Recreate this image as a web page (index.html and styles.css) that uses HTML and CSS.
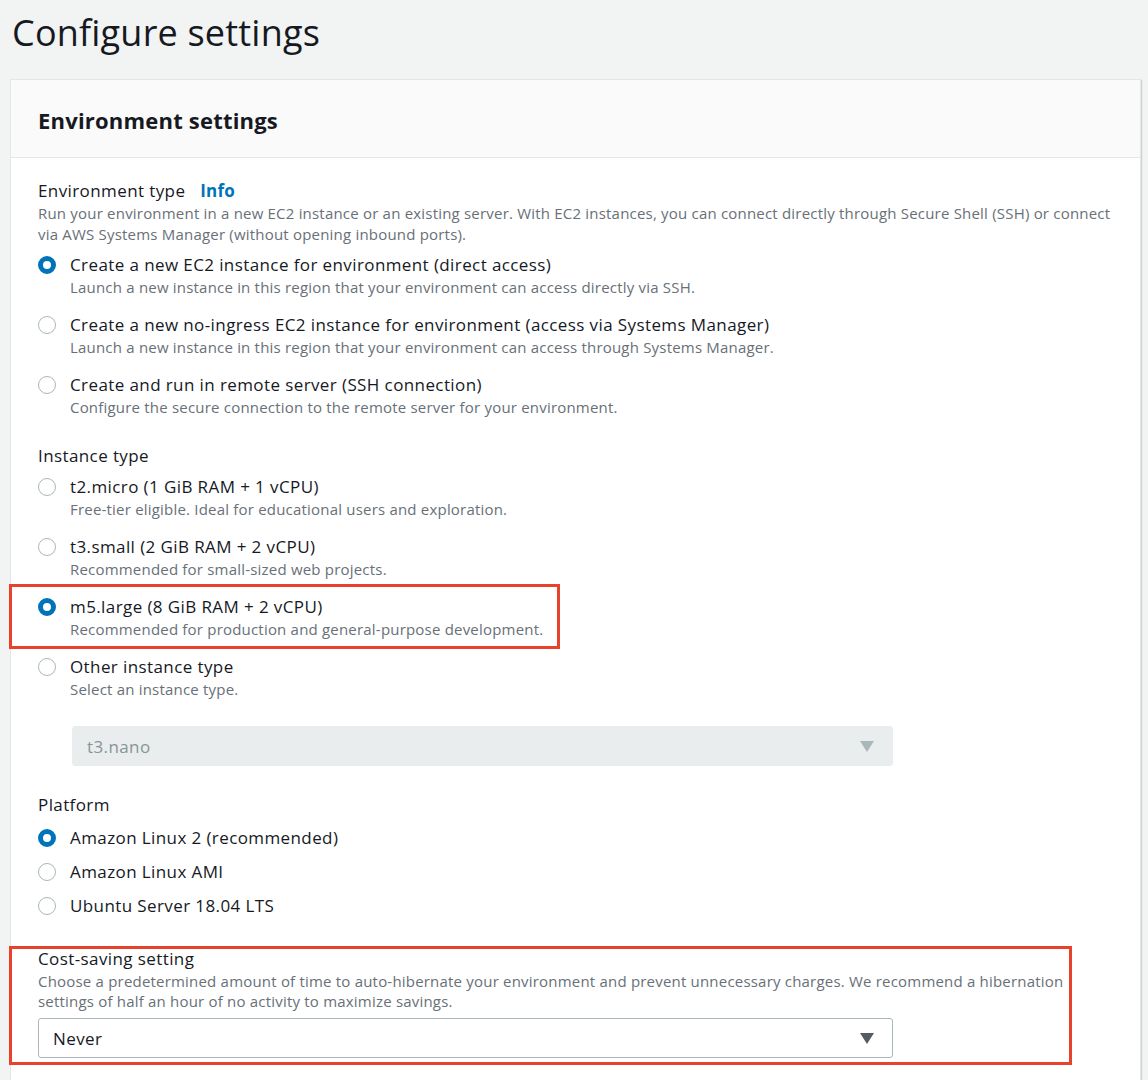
FILE: index.html
```html
<!DOCTYPE html>
<html>
<head>
<meta charset="utf-8">
<link rel="stylesheet" href="styles.css">
</head>
<body>
<div class="page">
  <h1 class="page-title">Configure settings</h1>
  <section class="panel">
    <header class="panel-header"><h2>Environment settings</h2></header>
    <div class="panel-body">

      <div class="field">
        <div class="field-label">Environment type <a class="info">Info</a></div>
        <div class="field-desc">Run your environment in a new EC2 instance or an existing server. With EC2 instances, you can connect directly through Secure Shell (SSH) or connect via AWS Systems Manager (without opening inbound ports).</div>
        <div class="radio-group">
          <label class="radio checked"><span class="dot"></span><span class="radio-text"><span class="radio-label">Create a new EC2 instance for environment (direct access)</span><span class="radio-desc">Launch a new instance in this region that your environment can access directly via SSH.</span></span></label>
          <label class="radio"><span class="dot"></span><span class="radio-text"><span class="radio-label">Create a new no-ingress EC2 instance for environment (access via Systems Manager)</span><span class="radio-desc">Launch a new instance in this region that your environment can access through Systems Manager.</span></span></label>
          <label class="radio"><span class="dot"></span><span class="radio-text"><span class="radio-label">Create and run in remote server (SSH connection)</span><span class="radio-desc">Configure the secure connection to the remote server for your environment.</span></span></label>
        </div>
      </div>

      <div class="field">
        <div class="field-label">Instance type</div>
        <div class="radio-group">
          <label class="radio"><span class="dot"></span><span class="radio-text"><span class="radio-label">t2.micro (1 GiB RAM + 1 vCPU)</span><span class="radio-desc">Free-tier eligible. Ideal for educational users and exploration.</span></span></label>
          <label class="radio"><span class="dot"></span><span class="radio-text"><span class="radio-label">t3.small (2 GiB RAM + 2 vCPU)</span><span class="radio-desc">Recommended for small-sized web projects.</span></span></label>
          <label class="radio checked highlight-small"><span class="dot"></span><span class="radio-text"><span class="radio-label">m5.large (8 GiB RAM + 2 vCPU)</span><span class="radio-desc">Recommended for production and general-purpose development.</span></span></label>
          <label class="radio"><span class="dot"></span><span class="radio-text"><span class="radio-label">Other instance type</span><span class="radio-desc">Select an instance type.</span></span></label>
        </div>
        <div class="select disabled indented"><span>t3.nano</span><span class="caret"></span></div>
      </div>

      <div class="field field-platform">
        <div class="field-label">Platform</div>
        <div class="radio-group compact">
          <label class="radio checked"><span class="dot"></span><span class="radio-text"><span class="radio-label">Amazon Linux 2 (recommended)</span></span></label>
          <label class="radio"><span class="dot"></span><span class="radio-text"><span class="radio-label">Amazon Linux AMI</span></span></label>
          <label class="radio"><span class="dot"></span><span class="radio-text"><span class="radio-label">Ubuntu Server 18.04 LTS</span></span></label>
        </div>
      </div>

      <div class="field highlight-wide">
        <div class="field-label">Cost-saving setting</div>
        <div class="field-desc narrow">Choose a predetermined amount of time to auto-hibernate your environment and prevent unnecessary charges. We recommend a hibernation settings of half an hour of no activity to maximize savings.</div>
        <div class="select"><span>Never</span><span class="caret"></span></div>
      </div>

    </div>
  </section>
</div>
</body>
</html>
```
FILE: styles.css
```css
* { box-sizing: border-box; }
html, body { margin: 0; padding: 0; }
body {
  background: #f2f3f3;
  font-family: "Open Sans", Roboto, "Liberation Sans", Arial, sans-serif;
  color: #16191f;
  height: 1080px;
  overflow: hidden;
}
.page { padding: 0 7px 0 10px; }
.page-title {
  margin: 0;
  padding: 11px 0 0 2px;
  height: 79px;
  font-size: 36px;
  line-height: 44px;
  font-weight: 400;
  letter-spacing: 0.2px;
}
.panel {
  background: #fff;
  border: 1px solid #e4e7e7;
  box-shadow: 1px 1px 1px 0 rgba(0, 28, 36, 0.15);
  height: 1100px;
}
.panel-header {
  background: #fafafa;
  border-bottom: 1px solid #e4e7e7;
  height: 78px;
  padding: 0 27px;
  display: flex;
  align-items: center;
}
.panel-header h2 {
  margin: 0;
  font-size: 22px;
  font-weight: 700;
  line-height: 28px;
  padding-top: 3px;
  letter-spacing: 0.2px;
}
.panel-body { padding: 22px 27px 0 27px; }
.field { margin-bottom: 28px; position: relative; }
.field-platform { margin-bottom: 31px; }
.field-label {
  font-size: 17px;
  line-height: 22px;
  letter-spacing: 0.4px;
}
.info {
  color: #0073bb;
  font-weight: 700;
  margin-left: 10px;
  letter-spacing: 0.2px;
}
.field-desc {
  font-size: 15px;
  line-height: 21px;
  color: #687078;
  margin-top: 1px;
  letter-spacing: 0.2px;
}
.field-desc.narrow { max-width: 1030px; line-height: 20px; }
.radio-group {
  display: flex;
  flex-direction: column;
  gap: 17px;
  margin-top: 9px;
}
.radio-group.compact { gap: 12px; margin-top: 11px; }
.radio { display: flex; align-items: flex-start; position: relative; }
.dot {
  flex: none;
  width: 18px;
  height: 18px;
  border-radius: 50%;
  border: 1.5px solid #aab7b8;
  margin-top: 2px;
  margin-right: 14px;
  background: #fff;
}
.radio.checked .dot {
  border: 5px solid #0073bb;
  background: #fff;
}
.radio-text { display: flex; flex-direction: column; }
.radio-label { font-size: 17px; line-height: 22px; letter-spacing: 0.4px; }
.radio-desc {
  font-size: 15px;
  line-height: 20px;
  color: #687078;
  margin-top: 1px;
  letter-spacing: 0.2px;
}
.select {
  display: flex;
  align-items: center;
  justify-content: space-between;
  width: 855px;
  height: 40px;
  border: 1px solid #aab7b8;
  border-radius: 3px;
  background: #fff;
  padding: 0 18px 0 14px;
  font-size: 17px;
  letter-spacing: 0.4px;
  margin-top: 7px;
}
.select.disabled {
  background: #eaeded;
  border-color: #eaeded;
  color: #879596;
}
.select.indented { width: 821px; margin-left: 34px; margin-top: 27px; }
.caret {
  width: 0; height: 0;
  border-left: 7px solid transparent;
  border-right: 7px solid transparent;
  border-top: 11px solid #545b64;
}
.select.disabled .caret { border-top-color: #aab7b8; }
.highlight-small::before {
  content: "";
  position: absolute;
  left: -29px;
  top: -12px;
  width: 545px;
  bottom: -10px;
  border: 3px solid #e8412c;
}
.highlight-wide::before {
  content: "";
  position: absolute;
  left: -29px;
  top: -2px;
  width: 1057px;
  bottom: -7px;
  border: 3px solid #e8412c;
}
```
